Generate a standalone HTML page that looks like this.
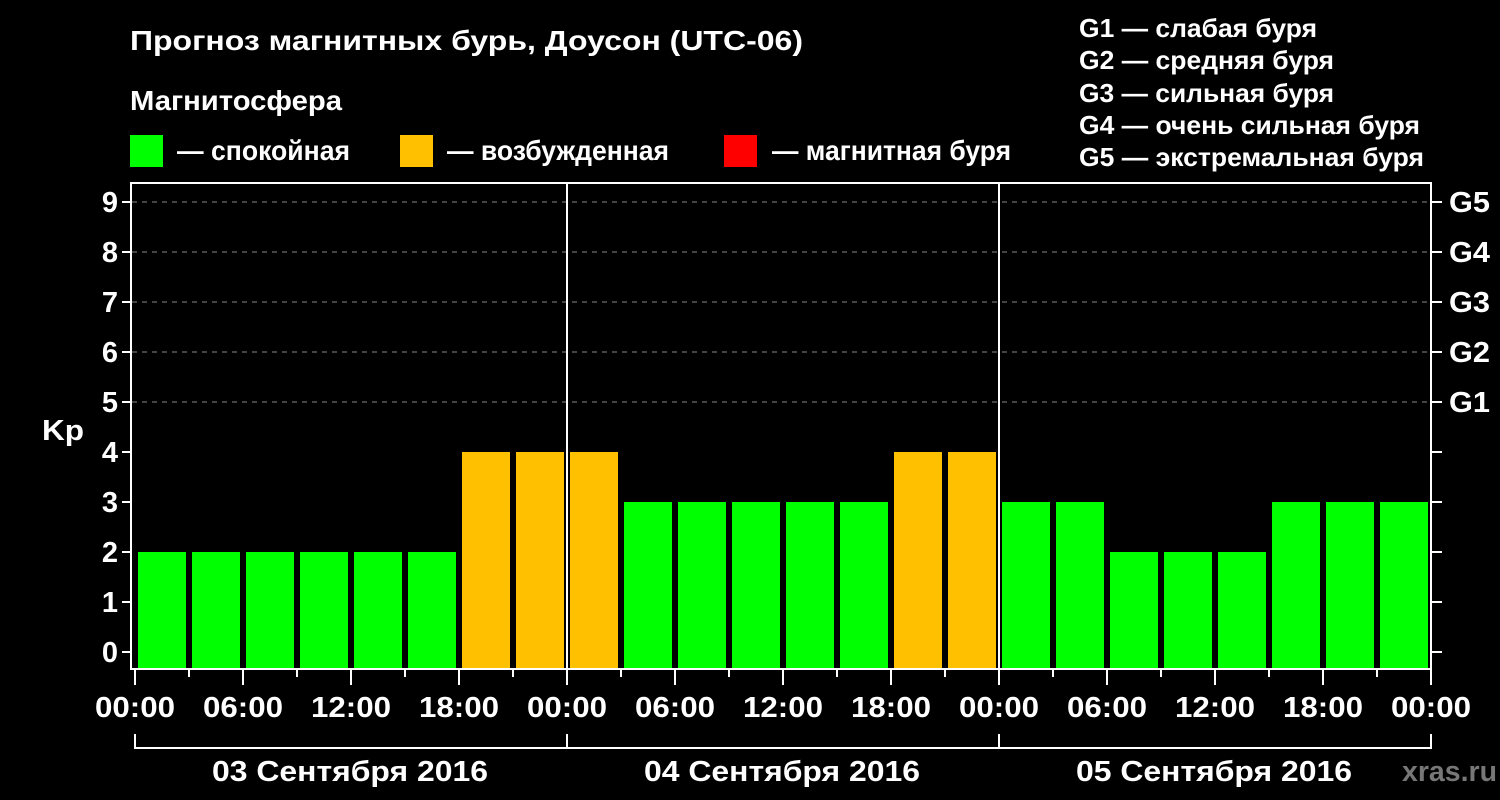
<!DOCTYPE html>
<html><head><meta charset="utf-8"><style>
html,body{margin:0;padding:0;background:#000;}
svg{display:block;font-family:"Liberation Sans",sans-serif;font-weight:bold;}
</style></head><body>
<svg width="1500" height="800" viewBox="0 0 1500 800" xmlns="http://www.w3.org/2000/svg">
<rect width="1500" height="800" fill="#000"/>
<g fill="#fff" font-size="28" lengthAdjust="spacingAndGlyphs">
<text x="130" y="50" textLength="673" lengthAdjust="spacingAndGlyphs">Прогноз магнитных бурь, Доусон (UTC-06)</text>
<text x="130" y="110" textLength="212" lengthAdjust="spacingAndGlyphs">Магнитосфера</text>
<text x="177" y="160" textLength="173" lengthAdjust="spacingAndGlyphs">— спокойная</text>
<text x="447" y="160" textLength="222" lengthAdjust="spacingAndGlyphs">— возбужденная</text>
<text x="772" y="160" textLength="239" lengthAdjust="spacingAndGlyphs">— магнитная буря</text>
</g>
<g fill="#fff" font-size="26">
<text x="1079" y="37" textLength="238" lengthAdjust="spacingAndGlyphs">G1 — слабая буря</text>
<text x="1079" y="69" textLength="255" lengthAdjust="spacingAndGlyphs">G2 — средняя буря</text>
<text x="1079" y="102" textLength="255" lengthAdjust="spacingAndGlyphs">G3 — сильная буря</text>
<text x="1079" y="134" textLength="341" lengthAdjust="spacingAndGlyphs">G4 — очень сильная буря</text>
<text x="1079" y="166" textLength="345" lengthAdjust="spacingAndGlyphs">G5 — экстремальная буря</text>
</g>
<rect x="130" y="135" width="33" height="32" fill="#00ff00"/>
<rect x="400" y="135" width="33" height="32" fill="#ffc000"/>
<rect x="724" y="135" width="33" height="32" fill="#ff0000"/>
<g stroke="#888" stroke-width="1" stroke-dasharray="5,5">
<line x1="132" y1="202" x2="1431" y2="202"/>
<line x1="132" y1="252" x2="1431" y2="252"/>
<line x1="132" y1="302" x2="1431" y2="302"/>
<line x1="132" y1="352" x2="1431" y2="352"/>
<line x1="132" y1="402" x2="1431" y2="402"/>
</g>
<g fill="#00ff00">
<rect x="138" y="552" width="48" height="116"/>
<rect x="192" y="552" width="48" height="116"/>
<rect x="246" y="552" width="48" height="116"/>
<rect x="300" y="552" width="48" height="116"/>
<rect x="354" y="552" width="48" height="116"/>
<rect x="408" y="552" width="48" height="116"/>
<rect x="624" y="502" width="48" height="166"/>
<rect x="678" y="502" width="48" height="166"/>
<rect x="732" y="502" width="48" height="166"/>
<rect x="786" y="502" width="48" height="166"/>
<rect x="840" y="502" width="48" height="166"/>
<rect x="1002" y="502" width="48" height="166"/>
<rect x="1056" y="502" width="48" height="166"/>
<rect x="1110" y="552" width="48" height="116"/>
<rect x="1164" y="552" width="48" height="116"/>
<rect x="1218" y="552" width="48" height="116"/>
<rect x="1272" y="502" width="48" height="166"/>
<rect x="1326" y="502" width="48" height="166"/>
<rect x="1380" y="502" width="48" height="166"/>
</g>
<g fill="#ffc000">
<rect x="462" y="452" width="48" height="216"/>
<rect x="516" y="452" width="48" height="216"/>
<rect x="570" y="452" width="48" height="216"/>
<rect x="894" y="452" width="48" height="216"/>
<rect x="948" y="452" width="48" height="216"/>
</g>
<g stroke="#fff" stroke-width="2" fill="none">
<rect x="131" y="183" width="1300" height="486"/>
<line x1="567" y1="183" x2="567" y2="669"/>
<line x1="999" y1="183" x2="999" y2="669"/>
<path d="M122 202H131M122 252H131M122 302H131M122 352H131M122 402H131M122 452H131M122 502H131M122 552H131M122 602H131M122 652H131"/>
<path d="M1431 202H1442M1431 252H1442M1431 302H1442M1431 352H1442M1431 402H1442M1431 452H1442M1431 502H1442M1431 552H1442M1431 602H1442M1431 652H1442"/>
<path d="M135 669V685M243 669V685M351 669V685M459 669V685M567 669V685M675 669V685M783 669V685M891 669V685M999 669V685M1107 669V685M1215 669V685M1323 669V685M1431 669V685"/>
<path d="M189 669V677M297 669V677M405 669V677M513 669V677M621 669V677M729 669V677M837 669V677M945 669V677M1053 669V677M1161 669V677M1269 669V677M1377 669V677"/>
<path d="M135 734V748H1431V734M567 734V748M999 734V748"/>
</g>
<g fill="#fff" font-size="29" text-anchor="end">
<text x="118" y="212">9</text><text x="118" y="262">8</text><text x="118" y="312">7</text>
<text x="118" y="362">6</text><text x="118" y="412">5</text><text x="118" y="462">4</text>
<text x="118" y="512">3</text><text x="118" y="562">2</text><text x="118" y="612">1</text>
<text x="118" y="662">0</text>
</g>
<text x="42" y="440" fill="#fff" font-size="29" textLength="42" lengthAdjust="spacingAndGlyphs">Kp</text>
<g fill="#fff" font-size="29">
<text x="1449" y="212" textLength="41" lengthAdjust="spacingAndGlyphs">G5</text>
<text x="1449" y="262" textLength="41" lengthAdjust="spacingAndGlyphs">G4</text>
<text x="1449" y="312" textLength="41" lengthAdjust="spacingAndGlyphs">G3</text>
<text x="1449" y="362" textLength="41" lengthAdjust="spacingAndGlyphs">G2</text>
<text x="1449" y="412" textLength="41" lengthAdjust="spacingAndGlyphs">G1</text>
</g>
<g fill="#fff" font-size="29">
<text x="95" y="717" textLength="80" lengthAdjust="spacingAndGlyphs">00:00</text>
<text x="203" y="717" textLength="80" lengthAdjust="spacingAndGlyphs">06:00</text>
<text x="311" y="717" textLength="80" lengthAdjust="spacingAndGlyphs">12:00</text>
<text x="419" y="717" textLength="80" lengthAdjust="spacingAndGlyphs">18:00</text>
<text x="527" y="717" textLength="80" lengthAdjust="spacingAndGlyphs">00:00</text>
<text x="635" y="717" textLength="80" lengthAdjust="spacingAndGlyphs">06:00</text>
<text x="743" y="717" textLength="80" lengthAdjust="spacingAndGlyphs">12:00</text>
<text x="851" y="717" textLength="80" lengthAdjust="spacingAndGlyphs">18:00</text>
<text x="959" y="717" textLength="80" lengthAdjust="spacingAndGlyphs">00:00</text>
<text x="1067" y="717" textLength="80" lengthAdjust="spacingAndGlyphs">06:00</text>
<text x="1175" y="717" textLength="80" lengthAdjust="spacingAndGlyphs">12:00</text>
<text x="1283" y="717" textLength="80" lengthAdjust="spacingAndGlyphs">18:00</text>
<text x="1391" y="717" textLength="80" lengthAdjust="spacingAndGlyphs">00:00</text>
<text x="212" y="781" textLength="276" lengthAdjust="spacingAndGlyphs">03 Сентября 2016</text>
<text x="644" y="781" textLength="276" lengthAdjust="spacingAndGlyphs">04 Сентября 2016</text>
<text x="1076" y="781" textLength="276" lengthAdjust="spacingAndGlyphs">05 Сентября 2016</text>
</g>
<text x="1402" y="781" fill="#777" font-size="29" textLength="95" lengthAdjust="spacingAndGlyphs">xras.ru</text>
</svg>
</body></html>
